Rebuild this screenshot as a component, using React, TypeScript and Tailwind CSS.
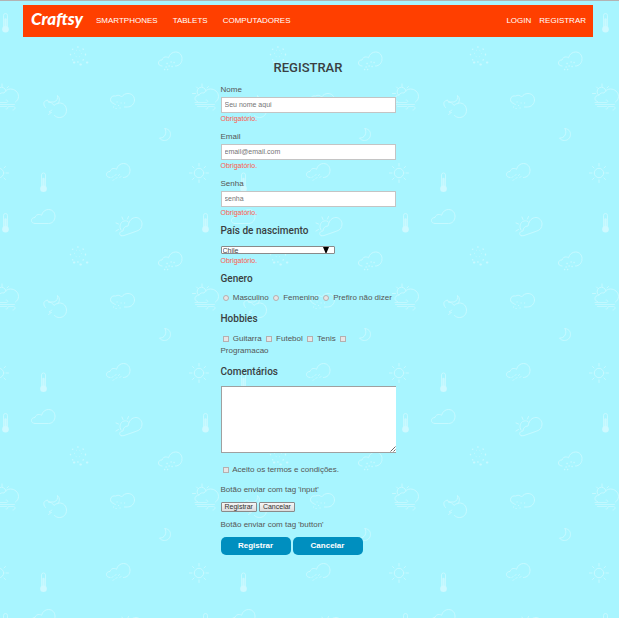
import type { ReactNode } from "react";

const CLOUD = "M4 14.5C1.5 14.5.5 13 .5 11.5c0-2 1.5-3 3.5-3 .5-2 2.5-3.5 4.5-3 .8 0 1.5.4 2 .8C11.5 2.5 14.500 .5 17.500 .5c4 0 6.500 3 6.500 6.800 0 4-2.500 7.200-6.500 7.200";

function Thermometer({ x, y }: { x: number; y: number }) {
  return (
    <g transform={`translate(${x} ${y})`}>
      <path d="M1.500 14V3a2 2 0 0 1 4 0v11" />
      <path d="M3.500 7v9" strokeWidth="2.500" />
      <circle cx="3.500" cy="16.700" r="3.300" fill="#cff9ff" stroke="none" />
    </g>
  );
}

function SunnyWind({ x }: { x: number }) {
  return (
    <g transform={`translate(${x} 43)`}>
      <path d="M9.500 1v2.500M4 4l1.500 1.500M16 3.500l-1.500 1.500M0 10.500h3M6 12a4.500 4.500 0 1 1 7.500-4" />
      <path d="M5 18.500c-1.500-.5-2.500-1.500-2.500-3s1.500-3.500 4-3.500c1-2 3-2.500 5-2 1.500-2.500 3.500-4 6.500-4 4 0 8 3 8 7.500 0 2.500-1.500 4.500-3 5.500" />
      <path d="M2.500 19.500H14c2 0 1.500-3-.5-2.500M3 21.500h19M5 23.500h9c2 0 2 3-.5 2.500M16 23.500h5c2.500 0 2 3.500-.5 3.500" strokeWidth=".8" />
    </g>
  );
}

function Sun({ x }: { x: number }) {
  return (
    <g transform={`translate(${x} 133)`}>
      <circle r="4.700" />
      <path d="M0-9.500v2.500M0 7v2.500M-9.500 0h2.500M7 0h2.500M-6.500-6.500l1.500 1.500M5 5l1.500 1.500M-6.500 6.500l1.500-1.500M5-5l1.500-1.500" />
    </g>
  );
}

function WeatherBackdrop() {
  return (
    <svg className="absolute inset-0 h-full w-full" aria-hidden="true">
      <defs>
        <pattern id="weather" y="39" width="200" height="200" patternUnits="userSpaceOnUse">
          <g fill="none" stroke="#c9f9ff" strokeWidth=".9" strokeLinecap="round">
            <circle cx="78" cy="14.500" r="7.500" strokeDasharray=".4 5.400" strokeWidth="1.300" />
            <circle cx="78" cy="13.500" r="3.500" strokeDasharray=".2 3.400" strokeWidth=".8" />
            <path d="M74 22.500h.3M80.500 24.500h.3M87 22.500h.3" strokeWidth="2.200" />
            <g transform="translate(158 11.500)">
              <path d={CLOUD} />
              <path d="M9 12h.2M13 10.500h.2M16 11h.2M8 15.500h.2M11 14.500h.2M14 15h.2M6.500 18h.2M9.500 18h.2" strokeWidth="1.300" />
            </g>
            <SunnyWind x={192.5} />
            <SunnyWind x={-7.5} />
            <g transform="translate(43 55)">
              <path d="M4.500 5l1 2h5.500c3-1 4-3.500 3.500-6.500 3 3 2 6.500 0 8.500M2.500 12.500C-.5 9 .5 5.500 4 5.500M5.500 7c2 0 4 1 5.500 3.500 1.500-1.500 3.500-2.500 5.500-2.500 4 0 7 3 7 7.200s-3 7.300-7 7.300c-2 0-3.500-.5-5-2" />
              <path d="M9 15l-3 2 2.500.5-3 2" strokeWidth=".8" />
            </g>
            <g transform="translate(110 53)">
              <path d="M4 10.500C1.500 10 .5 8.500 .5 6.500c0-3 3-4 5-3.500 2-1 5-1 6 1 2-2.500 4-3.500 6.500-3.500 4 0 6.500 3 6.500 6.500s-3 7-7 7h-3" />
              <path d="M7 9h.2M11 10h.2M14.500 10h.2M5 11.500h.2M8.500 12.500h.2M3.500 14h.2M6 15.500h.2M10 15h.2" strokeWidth="1" />
            </g>
            <path d="M165 88.500c4 .5 5.500 3 5.500 6 0 3.500-3 6-6 6-2 0-4-.8-5-2.500 5 .5 8-5 5.500-9.500Z" />
            <Sun x={199} />
            <Sun x={-1} />
            <Thermometer x={40} y={132} />
            <g transform="translate(106 123)">
              <path d={CLOUD} />
              <path d="M10 11.500l-1 1M13.500 11.500l-1 1M7 13.500l-1 1M11 14.500l-1 1M15 13.500l-1 1M8 16.500l-1 1" />
            </g>
            <path transform="translate(31 169)" d={`${CLOUD}H4`} />
            <g transform="translate(115 176)">
              <path d="M7 1l1 2.500M13.500 .5l-1 2.500M1 7l2.500 1M1 15l2.500-1.500M6 14c-2-3-1-8 3-9 2-.5 4 0 5 1.500" />
              <path d="M6 19.500c-2-1-1.500-3 0-4 .5-.5 1.500-.5 2-.5 0-3 2-5 5-5C14 4.500 17 1.500 21 1.500c3 0 6 3 6 6.500 0 4-2 6-5.500 7.200L10 19.200c-1.500.5-2.500.8-4 .3Z" />
            </g>
            <Thermometer x={2} y={172.5} />
          </g>
        </pattern>
      </defs>
      <rect width="100%" height="100%" fill="url(#weather)" />
    </svg>
  );
}

function Field({ id, label, type, placeholder }: { id: string; label: string; type: string; placeholder: string }) {
  return (
    <div className="mb-1.5">
      <label htmlFor={id} className="mb-px block">{label}</label>
      <input
        id={id}
        type={type}
        placeholder={placeholder}
        className="block h-4 w-full border border-[#c4c4c4] bg-white px-[3px] pb-px text-[7px] leading-3 placeholder:text-[#757575]"
      />
      <Required />
    </div>
  );
}

function Required() {
  return <p className="text-[7px] leading-3 text-[#ff5a4d]">Obrigatório.</p>;
}

function Heading({ children }: { children: ReactNode }) {
  return <h2 className="font-[Roboto,sans-serif] text-[10px] leading-3 font-medium text-[#3a3f42]">{children}</h2>;
}

const boxClass = "ml-0.5 size-1.5 appearance-none border border-[#b4b0b0] bg-[#e8e4e4] align-middle checked:bg-[#555]";

function Radio({ label }: { label: string }) {
  return (
    <label>
      <input type="radio" name="genero" className={`${boxClass} mr-0.5 rounded-full`} /> {label}
    </label>
  );
}

function Check({ label }: { label: string }) {
  return (
    <label>
      <input type="checkbox" className={`${boxClass} mr-0.5`} /> {label}
    </label>
  );
}

const plainButton =
  "h-2.5 rounded-[1px] border border-[#8a8a8a] bg-linear-to-b from-[#f6f6f6] to-[#dcdcdc] px-[3px] text-[7px] leading-2 text-[#333]";
const blueButton = "h-[18px] w-[70px] rounded-[5px] bg-[#008fbf] pb-px text-[8px] leading-3 font-bold text-white";

export default function App() {
  return (
    <div className="relative min-h-screen border-t border-[#b3b3b3] bg-[#a8f5ff] font-['Liberation_Sans',Arial,sans-serif] text-[8px] leading-3 text-[#555]">
      <WeatherBackdrop />
      <div className="relative mr-[26px] ml-[23px] pt-1 pb-8">
        <header className="flex h-8 items-center bg-[#ff3f00] px-2 text-white">
          <a href="#" className="w-[65px] pb-1 font-[Lato,sans-serif] text-[17px] leading-6 font-black italic">Craftsy</a>
          <nav className="flex flex-1 gap-[15px]">
            <a href="#">SMARTPHONES</a>
            <a href="#">TABLETS</a>
            <a href="#">COMPUTADORES</a>
          </nav>
          <nav className="-mr-px flex gap-2">
            <a href="#">LOGIN</a>
            <a href="#">REGISTRAR</a>
          </nav>
        </header>

        <form className="mx-auto mt-[23px] w-[175px]" onSubmit={(e) => e.preventDefault()}>
          <h1 className="mb-2 text-center font-[Roboto,sans-serif] text-[13px] leading-4 font-medium text-[#3a3f42]">REGISTRAR</h1>

          <Field id="nome" label="Nome" type="text" placeholder="Seu nome aqui" />
          <Field id="email" label="Email" type="email" placeholder="email@email.com" />
          <Field id="senha" label="Senha" type="password" placeholder="senha" />

          <Heading>País de nascimento</Heading>
          <div className="relative mt-[9px] mb-px w-[114px]">
            <select
              aria-label="País de nascimento"
              className="block h-2 w-full appearance-none rounded-[1px] border border-[#8a8a8a] bg-white px-px text-[7px] leading-2 text-[#444]"
            >
              <option>Chile</option>
              <option>Brasil</option>
            </select>
            <svg className="pointer-events-none absolute top-px right-1.5 h-1.5 w-1.5" viewBox="0 0 6 6" aria-hidden="true">
              <path d="M0 0h6L3.500 6h-1Z" fill="#000" />
            </svg>
          </div>
          <Required />

          <div className="mt-1.5">
            <Heading>Genero</Heading>
            <p className="mt-[7px]">
              <Radio label="Masculino" /> <Radio label="Femenino" /> <Radio label="Prefiro não dizer" />
            </p>
          </div>

          <div className="mt-[9px]">
            <Heading>Hobbies</Heading>
            <p className="mt-2 pr-4">
              <Check label="Guitarra" /> <Check label="Futebol" /> <Check label="Tenis" /> <Check label="Programacao" />
            </p>
          </div>

          <div className="mt-[9px]">
            <Heading>Comentários</Heading>
            <div className="relative mt-2">
              <textarea
                aria-label="Comentários"
                className="block h-[67px] w-full resize-none border border-r-0 border-[#a0a0a0] bg-white p-0.5"
              />
              <svg className="pointer-events-none absolute right-0 bottom-px h-1.5 w-1.5" viewBox="0 0 6 6" aria-hidden="true">
                <path d="M.5 5.500l5-5M3.500 5.500l2-2" fill="none" stroke="#444" strokeWidth=".8" />
              </svg>
            </div>
          </div>

          <p className="mt-[11px]">
            <Check label="Aceito os termos e condições." />
          </p>

          <p className="mt-2">Botão enviar com tag 'input'</p>
          <div className="mt-1.5 flex gap-0.5">
            <input type="submit" value="Registrar" className={plainButton} />
            <input type="reset" value="Cancelar" className={plainButton} />
          </div>

          <p className="mt-[7px]">Botão enviar com tag 'button'</p>
          <div className="mt-1.5 flex gap-0.5">
            <button type="submit" className={blueButton}>Registrar</button>
            <button type="reset" className={blueButton}>Cancelar</button>
          </div>
        </form>
      </div>
    </div>
  );
}
